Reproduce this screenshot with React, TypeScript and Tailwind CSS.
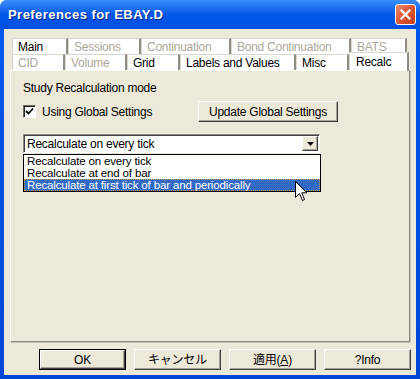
import React from 'react';

const tabsTop = [
  { label: 'Main', w: 'w-[56px]', disabled: false },
  { label: 'Sessions', w: 'w-[73px]', disabled: true },
  { label: 'Continuation', w: 'w-[90px]', disabled: true },
  { label: 'Bond Continuation', w: 'w-[120px]', disabled: true },
  { label: 'BATS', w: 'w-[56px]', disabled: true },
];

const tabsBottom = [
  { label: 'CID', w: 'w-[53px]', disabled: true },
  { label: 'Volume', w: 'w-[62px]', disabled: true },
  { label: 'Grid', w: 'w-[53px]', disabled: false },
  { label: 'Labels and Values', w: 'w-[116px]', disabled: false },
  { label: 'Misc', w: 'w-[53px]', disabled: false },
];

const options = ['Recalculate on every tick', 'Recalculate at end of bar', 'Recalculate at first tick of bar and periodically'];

const raised =
  'border border-t-white border-l-white border-r-[#404040] border-b-[#404040] shadow-[inset_-1px_-1px_0_#A6A396] bg-[#ECE9D8]';

const Tab = ({ label, w, disabled }: { label: string; w: string; disabled: boolean }) => (
  <div
    className={`${w} h-[16px] flex items-center pl-[5px] bg-white border-t border-l border-t-[#D9D7CE] border-l-[#D9D7CE] border-r-2 border-r-[#8F8D84] ${
      disabled ? 'text-[#ACA899]' : 'text-black'
    }`}
  >
    {label}
  </div>
);

const Button = ({ children, w, isDefault }: { children: React.ReactNode; w: string; isDefault?: boolean }) => (
  <div className={`${w} h-[21px] ${isDefault ? 'border border-black' : ''}`}>
    <div className={`w-full h-full flex items-center justify-center ${raised}`}>{children}</div>
  </div>
);

export default function App() {
  return (
    <div className="w-[420px] h-[379px] bg-white">
      <div className="relative w-[420px] h-[379px] flex flex-col rounded-t-[7px] bg-gradient-to-b from-[#0058EE] to-[#0047D8] font-['Liberation_Sans','Noto_Sans_CJK_JP',sans-serif] text-[12px] tracking-[-0.25px] leading-[14px]">
        {/* Title bar */}
        <div className="h-[29px] flex items-center justify-between pl-[8px] pr-[4px] rounded-t-[7px] bg-gradient-to-b from-[#3C8EFB] via-[#0256E8] to-[#0050E2]">
          <span className="text-white font-bold text-[13px] tracking-[0.45px] [text-shadow:1px_1px_0_#0B2A8A]">
            Preferences for EBAY.D
          </span>
          <div className="w-[21px] h-[21px] rounded-[3px] border border-white bg-gradient-to-br from-[#E98C6E] via-[#DD5533] to-[#C4391B] flex items-center justify-center">
            <svg width="11" height="11" viewBox="0 0 11 11">
              <path d="M1.5 1.5 L9.5 9.5 M9.5 1.5 L1.5 9.5" stroke="white" strokeWidth="2.2" strokeLinecap="square" />
            </svg>
          </div>
        </div>

        {/* Client area */}
        <div className="flex-1 mx-[4px] mb-[4px] bg-[#ECE9D8] flex flex-col">
          <div className="ml-[8px] mt-[9px] flex flex-col">
            <div className="flex">
              {tabsTop.map((t) => (
                <Tab key={t.label} {...t} />
              ))}
            </div>
            <div className="flex items-end">
              {tabsBottom.map((t) => (
                <Tab key={t.label} {...t} />
              ))}
              <div className="relative z-10 w-[60px] h-[19px] -mt-[2px] -mb-[1px] flex items-center pl-[6px] bg-white border-t border-l border-t-[#D9D7CE] border-l-[#D9D7CE] border-r-2 border-r-[#8F8D84]">
                Recalc
              </div>
            </div>
          </div>

          {/* Panel */}
          <div className="flex-1 mx-[6px] border border-t-white border-l-white border-r-[#8A887F] border-b-[#8A887F] shadow-[1px_1px_0_#C9C6B8] pl-[12px] pt-[10px] flex flex-col">
            <div>Study Recalculation mode</div>
            <div className="flex items-center mt-[6px] h-[21px]">
              <div className="w-[175px] flex items-center">
                <div className="w-[13px] h-[13px] bg-white border border-t-[#6F6D64] border-l-[#6F6D64] border-r-white border-b-white shadow-[inset_1px_1px_0_#222] flex items-center justify-center">
                  <svg width="9" height="9" viewBox="0 0 9 9">
                    <path d="M1 4 L3.5 6.5 L8 1.5" stroke="black" strokeWidth="1.8" fill="none" />
                  </svg>
                </div>
                <span className="ml-[6px]">Using Global Settings</span>
              </div>
              <Button w="w-[140px]">Update Global Settings</Button>
            </div>

            <div className="relative mt-[12px] w-[297px] h-[19px]">
              <div className="w-full h-full bg-white border border-t-[#8A887F] border-l-[#8A887F] border-r-white border-b-white shadow-[inset_1px_1px_0_#404040] flex items-center justify-between pl-[3px] pr-[1px]">
                <span>{options[0]}</span>
                <div className={`w-[16px] h-[15px] flex items-center justify-center ${raised}`}>
                  <svg width="7" height="4" viewBox="0 0 7 4">
                    <path d="M0 0 H7 L3.5 4 Z" fill="black" />
                  </svg>
                </div>
              </div>

              {/* open list */}
              <div className="absolute left-0 top-[20px] w-[298px] bg-white border border-black text-[11.5px] tracking-[-0.15px]">
                {options.map((o, i) => (
                  <div
                    key={o}
                    className={`h-[12px] leading-[12px] pl-[3px] overflow-hidden ${
                      i === 2 ? 'bg-[#316AC5] text-white outline outline-1 outline-dotted outline-[#E8A040] -outline-offset-1' : ''
                    }`}
                  >
                    {o}
                  </div>
                ))}
              </div>
            </div>
          </div>

          {/* Bottom buttons */}
          <div className="flex justify-end gap-[8px] pr-[5px] mt-[7px] mb-[5px]">
            <Button w="w-[87px]" isDefault>
              OK
            </Button>
            <Button w="w-[87px]">キャンセル</Button>
            <Button w="w-[87px]">
              <span>
                適用(<span className="underline">A</span>)
              </span>
            </Button>
            <Button w="w-[87px]">?Info</Button>
          </div>
        </div>

        {/* mouse cursor */}
        <svg className="absolute left-[295px] top-[181px]" width="13" height="21" viewBox="0 0 13 21">
          <path d="M0.5 0.5 V16.5 L4.5 12.5 L7.5 19.5 L9.5 18.5 L6.8 11.8 L12 11.8 Z" fill="white" stroke="black" strokeWidth="1" />
        </svg>
      </div>
    </div>
  );
}
